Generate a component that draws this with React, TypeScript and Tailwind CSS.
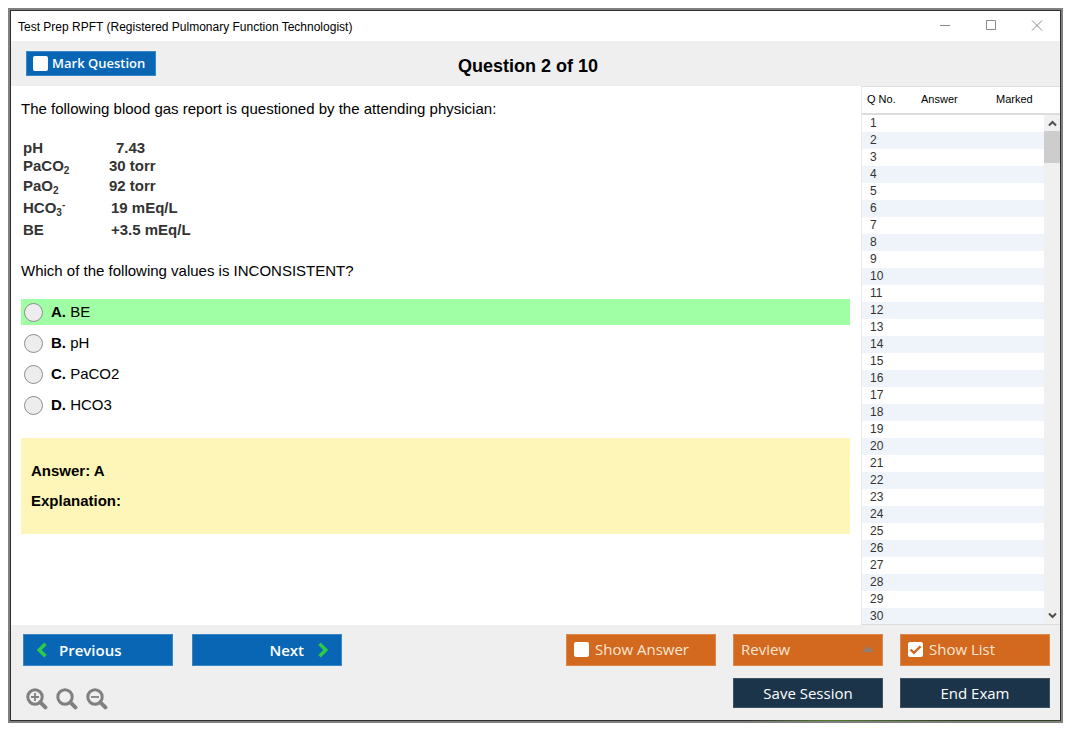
import { useState } from "react";

const values = [
  { label: "pH", value: "7.43", row: "h-[18px]", cell: "pl-[7px]" },
  { label: "PaCO", sub: "2", value: "30 torr", row: "h-[18px]", cell: "" },
  { label: "PaO", sub: "2", value: "92 torr", row: "h-[22px]", cell: "" },
  { label: "HCO", sub: "3", sup: "-", value: "19 mEq/L", row: "h-[22px]", cell: "pl-0.5" },
  { label: "BE", value: "+3.5 mEq/L", row: "h-[22px]", cell: "pl-0.5" },
];

const options = [
  { letter: "A", text: "BE", correct: true },
  { letter: "B", text: "pH", correct: false },
  { letter: "C", text: "PaCO2", correct: false },
  { letter: "D", text: "HCO3", correct: false },
];

const rows = Array.from({ length: 30 }, (_, i) => i + 1);

const checkboxClass =
  "size-[15px] shrink-0 appearance-none rounded-[2px] bg-white bg-center bg-no-repeat";

function TitleBar() {
  return (
    <div className="flex h-[30px] shrink-0 items-center justify-between bg-white pl-[7px] pr-[17px]">
      <h1 className="pt-px text-[12px] leading-4">
        Test Prep RPFT (Registered Pulmonary Function Technologist)
      </h1>
      <div className="flex gap-[34px] text-[#8a8a8a]">
        <button type="button" aria-label="Minimize">
          <svg width="12" height="12" fill="none" stroke="currentColor">
            <path d="M1 5.5h10" />
          </svg>
        </button>
        <button type="button" aria-label="Maximize">
          <svg width="12" height="12" fill="none" stroke="currentColor">
            <path d="M1.5 .5h9v9h-9z" />
          </svg>
        </button>
        <button type="button" aria-label="Close">
          <svg width="12" height="12" fill="none" stroke="currentColor">
            <path d="M1 .5l10 10M11 .5L1 10.500" />
          </svg>
        </button>
      </div>
    </div>
  );
}

function Magnifier({ label, sign }: { label: string; sign: string }) {
  return (
    <button type="button" aria-label={label}>
      <svg width="22" height="22" viewBox="0 0 22 22" fill="none" stroke="#808080">
        <circle cx="9" cy="9" r="7.2" strokeWidth="3" />
        <path d="M14.4 14.4l5 5" strokeWidth="4" strokeLinecap="round" />
        <path d={sign} strokeWidth="1.8" />
      </svg>
    </button>
  );
}

function QuestionList() {
  return (
    <aside className="ml-[11px] flex w-[199px] shrink-0 flex-col border-y border-l border-t-[#dcdcdc] border-b-[#dcdcdc] border-l-[#ececec] bg-white text-[11px]">
      <div className="flex min-h-0 flex-1">
        <div className="min-w-0 flex-1 overflow-hidden">
          <table className="w-full table-fixed border-collapse text-left">
            <thead>
              <tr className="h-[28px] shadow-[0_-2px_0_#dcdcdc_inset]">
                <th className="w-[54px] pb-1 pl-[5px] font-normal whitespace-nowrap">Q No.</th>
                <th className="w-[75px] pb-1 pl-[5px] font-normal">Answer</th>
                <th className="pb-1 pl-[5px] font-normal">Marked</th>
              </tr>
            </thead>
            <tbody className="text-[12px] text-[#333]">
              {rows.map((n) => (
                <tr key={n} className="h-[17px] leading-[17px] even:bg-[#eef4f9]">
                  <td className="p-0 pl-2">{n}</td>
                  <td className="p-0"></td>
                  <td className="p-0"></td>
                </tr>
              ))}
            </tbody>
          </table>
        </div>
        <div className="flex w-4 shrink-0 flex-col">
          <div className="h-[28px] shrink-0 shadow-[0_-2px_0_#dcdcdc_inset]" />
          <div className="flex flex-1 flex-col items-stretch bg-[#f0f0f0]">
            <button type="button" aria-label="Scroll up" className="flex h-4 items-center justify-center">
              <svg width="9" height="7" fill="none" stroke="#505050" strokeWidth="2">
                <path d="M1 5.500l3.500-3.500L8 5.500" />
              </svg>
            </button>
            <div className="h-8 bg-[#cdcdcd]" />
            <button type="button" aria-label="Scroll down" className="mt-auto flex h-[17px] items-center justify-center">
              <svg width="9" height="7" fill="none" stroke="#505050" strokeWidth="2">
                <path d="M1 1.500L4.500 5 8 1.500" />
              </svg>
            </button>
          </div>
        </div>
      </div>
    </aside>
  );
}

export default function App() {
  const [selected, setSelected] = useState("");
  return (
    <div className="flex h-screen min-h-[600px] bg-white pt-2 pr-3 pb-3 pl-2 font-['Liberation_Sans',Arial,sans-serif] text-black">
      <div className="flex min-w-0 flex-1 flex-col border-2 border-[#808080] bg-white">
        <div className="flex min-h-0 flex-1 flex-col border-x border-t border-[#2f2f2f]">
          <TitleBar />

          <header className="grid h-[45px] shrink-0 grid-cols-[1fr_auto_1fr] items-center bg-[#efefef] pr-[30px] pl-[15px]">
            <label className="flex h-[25px] w-[130px] items-center gap-1 border border-[#3b86c4] bg-[#0866b4] pl-1.5 font-['Open_Sans',sans-serif] text-[13px] font-semibold text-white">
              <input type="checkbox" className={checkboxClass} />
              Mark Question
            </label>
            <h2 className="pt-1 text-[18px] leading-6 font-bold">Question 2 of 10</h2>
          </header>

          <div className="flex min-h-0 flex-1">
            <main className="min-w-0 flex-1 overflow-hidden pt-3.5 pl-2.5 text-[15px] leading-[18px]">
              <p>The following blood gas report is questioned by the attending physician:</p>

              <table className="mt-[21px] border-collapse font-bold text-[#333]">
                <tbody>
                  {values.map((v) => (
                    <tr key={v.label} className={v.row}>
                      <th scope="row" className="w-[88px] p-0 pl-0.5 text-left leading-4">
                        {v.label}
                        {v.sub && <sub className="text-[10px]">{v.sub}</sub>}
                        {v.sup && <sup className="text-[10px]">{v.sup}</sup>}
                      </th>
                      <td className="p-0 leading-4">
                        <span className={v.cell}>{v.value}</span>
                      </td>
                    </tr>
                  ))}
                </tbody>
              </table>

              <p className="mt-[21px]">Which of the following values is INCONSISTENT?</p>

              <div role="radiogroup" aria-label="Options" className="mt-[19px] flex flex-col gap-[5px]">
                {options.map((o) => (
                  <label
                    key={o.letter}
                    className={
                      o.correct
                        ? "flex h-[26px] items-center gap-2 bg-[#a0ffa4] pl-[3px]"
                        : "flex h-[26px] items-center gap-2 pl-[3px]"
                    }
                  >
                    <input
                      type="radio"
                      name="option"
                      checked={selected === o.letter}
                      onChange={() => setSelected(o.letter)}
                      className="size-[19px] appearance-none rounded-full border border-[#8e8e8e] bg-[#ededed] checked:border-[5px] checked:border-[#0866b4]"
                    />
                    <span>
                      <b>{o.letter}.</b> {o.text}
                    </span>
                  </label>
                ))}
              </div>

              <section className="mt-5 flex flex-col gap-3 bg-[#fef6b8] px-2.5 py-6 font-bold">
                <p>Answer: A</p>
                <p>Explanation:</p>
              </section>
            </main>
            <QuestionList />
          </div>

          <footer className="flex h-[95px] shrink-0 justify-between bg-[#efefef] pt-[9px] pr-2.5 pl-3 font-['Open_Sans',sans-serif] text-[15px] text-white">
            <div className="flex flex-col gap-[22px]">
              <div className="flex gap-[19px] font-semibold">
                <button type="button" className="flex h-8 w-[150px] items-center gap-3 border border-[#3b86c4] bg-[#0866b4] pl-3">
                  <svg width="11" height="16" fill="none" stroke="#2ecc40" strokeWidth="3.4">
                    <path d="M9.5 1.8L3.2 8l6.3 6.2" />
                  </svg>
                  Previous
                </button>
                <button type="button" className="flex h-8 w-[150px] items-center justify-end gap-3.5 border border-[#3b86c4] bg-[#0866b4] pr-3">
                  Next
                  <svg width="11" height="16" fill="none" stroke="#2ecc40" strokeWidth="3.4">
                    <path d="M1.5 1.8L7.8 8l-6.3 6.2" />
                  </svg>
                </button>
              </div>
              <div className="flex gap-2 pl-[3px]">
                <Magnifier label="Zoom in" sign="M5 9h8M9 5v8" />
                <Magnifier label="Reset zoom" sign="" />
                <Magnifier label="Zoom out" sign="M5 9h8" />
              </div>
            </div>

            <div className="grid grid-cols-[150px_150px_150px] grid-rows-[32px_30px] gap-x-[17px] gap-y-3">
              <label className="flex items-center gap-1.5 border border-[#dc8749] bg-[#d2691e] pb-0.5 pl-[7px] text-[#fbe6d6]">
                <input type="checkbox" className={checkboxClass} />
                Show Answer
              </label>
              <button type="button" aria-haspopup="menu" className="flex items-center justify-between border border-[#dc8749] bg-[#d2691e] pr-2 pb-0.5 pl-[7px] text-[#fbe6d6]">
                Review
                <svg width="12" height="6" fill="#8c8078">
                  <path d="M0 6l6-6 6 6z" />
                </svg>
              </button>
              <label className="flex items-center gap-1.5 border border-[#dc8749] bg-[#d2691e] pb-0.5 pl-[7px] text-[#fbe6d6]">
                <span className="grid">
                  <input type="checkbox" defaultChecked className={`${checkboxClass} peer col-start-1 row-start-1`} />
                  <svg
                    className="pointer-events-none invisible col-start-1 row-start-1 peer-checked:visible"
                    width="15"
                    height="15"
                    fill="none"
                    stroke="#d2691e"
                    strokeWidth="2.4"
                  >
                    <path d="M2.5 7.5l3.4 3.4 6.6-6.6" />
                  </svg>
                </span>
                Show List
              </label>
              <button type="button" className="col-start-2 border border-[#3c5263] bg-[#1b344a]">
                Save Session
              </button>
              <button type="button" className="border border-[#3c5263] bg-[#1b344a]">
                End Exam
              </button>
            </div>
          </footer>
        </div>
        <div className="h-px shrink-0 bg-linear-to-r from-[#2f2f2f] from-70% via-[#4f7f2a] via-78% to-[#2f3f22] to-90%" />
      </div>
    </div>
  );
}
